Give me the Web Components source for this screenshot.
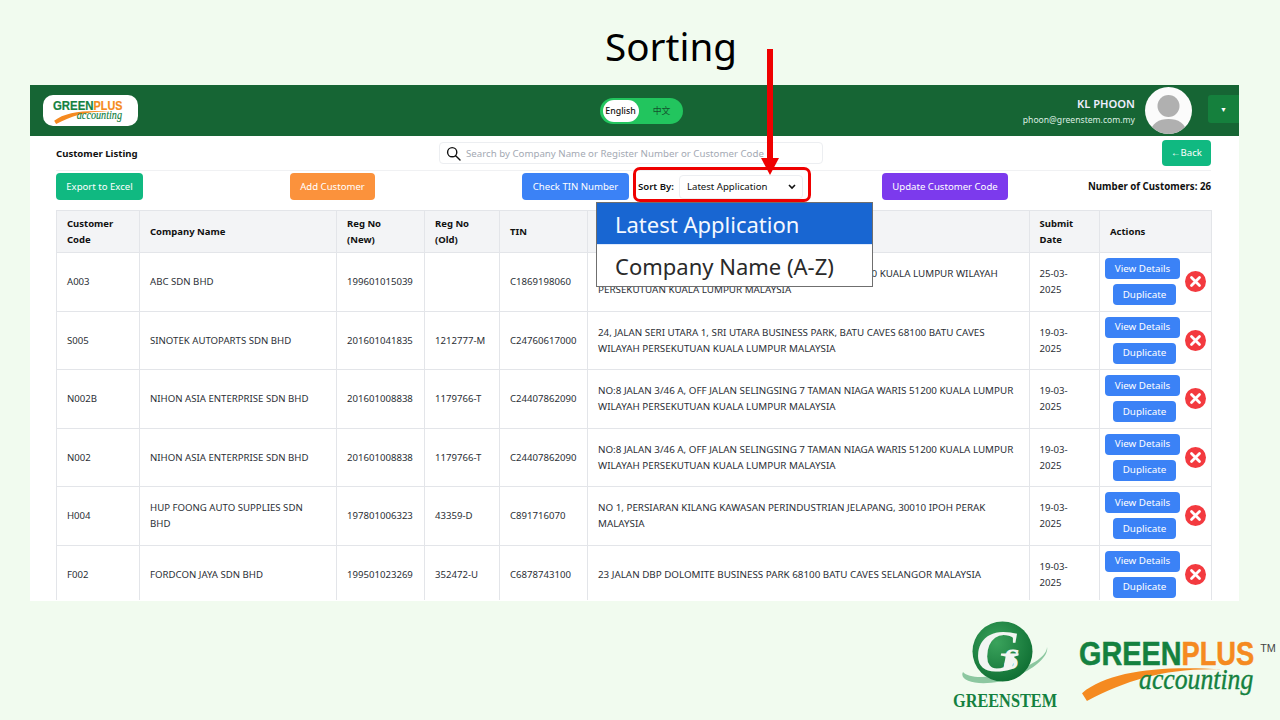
<!DOCTYPE html>
<html lang="en"><head><meta charset="utf-8"><title>Sorting</title>
<style>
html,body{margin:0;padding:0;background:#f1fbef;font-family:"Noto Sans","Open Sans",sans-serif;}
</style></head><body>
<gs-slide></gs-slide>
<script>
function def(name,css,html){
  customElements.define(name,class extends HTMLElement{
    connectedCallback(){
      if(this.shadowRoot)return;
      const r=this.attachShadow({mode:'open'});
      r.innerHTML='<style>'+css+'</style>'+(typeof html==='function'?html(this):html);
    }
  });
}
const gpLogo=(w,h,tm)=>`<svg width="${w}" height="${h}" viewBox="0 0 200 64" style="display:block;overflow:visible">
<text x="0" y="27" font-family="Liberation Sans" font-weight="700" font-size="33" fill="#14813f" stroke="#14813f" stroke-width=".5" textLength="104" lengthAdjust="spacingAndGlyphs">GREEN</text>
<text x="104" y="27" font-family="Liberation Sans" font-weight="700" font-size="33" fill="#f58a20" stroke="#f58a20" stroke-width=".5" textLength="74" lengthAdjust="spacingAndGlyphs">PLUS</text>
<path d="M3 56C30 34 80 28 146 32C90 30 50 42 8 64Z" fill="#f58a20"/>
<text x="61" y="52" font-family="Liberation Serif" font-style="italic" font-size="30" fill="#14813f" stroke="#14813f" stroke-width=".4" textLength="116" lengthAdjust="spacingAndGlyphs">accounting</text>
${tm?'<text x="184" y="14" font-family="Liberation Sans" font-size="11" fill="#444">TM</text>':''}
</svg>`;

def('gs-btn',`:host{display:inline-flex;align-items:center;justify-content:center;height:var(--h,27px);padding:0 var(--p,10.5px);border-radius:4px;background:var(--c,#3b82f6);color:#fff;font-size:var(--f,9.6px);line-height:1;white-space:nowrap;box-sizing:border-box}`,`<slot></slot>`);

def('gs-lang',`:host{display:flex;align-items:center;width:83px;height:26px;border-radius:13px;background:#22c55e;box-sizing:border-box;padding:2px 3px;font-size:8.8px;font-family:"Noto Sans","Noto Sans CJK SC",sans-serif}
.on{width:36px;height:22px;background:#fff;border-radius:11px;display:flex;align-items:center;justify-content:center;color:#111;font-weight:500}
.off{flex:1;text-align:center;color:#14532d;font-family:"Noto Sans CJK SC",sans-serif;padding-left:5px}`,`<div class="on">English</div><div class="off">中文</div>`);

def('gs-header',`:host{display:grid;grid-template-columns:1fr auto 1fr;align-items:center;height:51px;background:#166534;padding:0 0 0 13px;box-sizing:border-box;color:#fff}
.logo{width:95px;height:31px;background:#fff;border-radius:10px;display:flex;align-items:center;box-sizing:border-box;padding:1px 0 0 10px}
.right{display:flex;justify-content:flex-end;align-items:center}
.who{text-align:right;margin-right:10px;padding-top:2px}
.n{font-size:11.2px;font-weight:600;line-height:14px;color:#eef}
.e{font-size:8.6px;line-height:14px;color:#dcefe2;margin-top:2px}
.av{width:47px;height:47px;border-radius:50%;background:#fbfbfb;overflow:hidden;margin-right:16px}
.dd{width:31px;height:28px;background:#15803d;border-radius:3px 0 0 3px;display:flex;align-items:center;justify-content:center;font-size:7px;color:#fff;margin-bottom:3px}`,
`<div><div class="logo">${gpLogo(78,25,false)}</div></div>
<gs-lang></gs-lang>
<div class="right"><div class="who"><div class="n">KL PHOON</div><div class="e">phoon@greenstem.com.my</div></div>
<div class="av"><svg width="47" height="47" viewBox="0 0 47 47" style="display:block"><circle cx="23.5" cy="19" r="11" fill="#b0b0b0"/><path d="M5 47C6 36 14 32 23.5 32S41 36 42 47Z" fill="#b0b0b0"/></svg></div>
<div class="dd">▼</div></div>`);

def('gs-top',`:host{display:grid;grid-template-columns:383px 384px 1fr;align-items:center;height:35px;border-bottom:1px solid #f0f1f3;box-sizing:border-box}
.t{font-size:9.6px;font-weight:700;color:#111}
.s{height:22px;border:1px solid #eceef1;border-radius:4px;box-sizing:border-box;display:flex;align-items:center;padding-left:6px;font-size:9.7px;color:#a3a9b3;white-space:nowrap;overflow:hidden;gap:5px}
.r{display:flex;justify-content:flex-end}`,
`<div class="t">Customer Listing</div>
<div class="s"><svg width="15" height="15" viewBox="0 0 15 15" fill="none" stroke="#111" stroke-width="1.4" style="flex:none"><circle cx="6.2" cy="6.2" r="4.6"/><path d="M9.7 9.7L14 14" stroke-linecap="round"/></svg><span>Search by Company Name or Register Number or Customer Code</span></div>
<div class="r"><gs-btn style="--c:#10b981;--p:0;--h:26px;width:49px">←Back</gs-btn></div>`);

def('gs-tools',`:host{display:flex;align-items:center;height:27px;margin-top:2px;position:relative;font-size:9.6px;color:#111}
.sort{display:flex;align-items:center;margin-left:9px;width:171px;font-weight:600;font-size:9.6px;white-space:nowrap}
.sel{margin-left:5px;width:124px;height:24px;border:1px solid #eceef1;border-radius:4px;box-sizing:border-box;font-weight:400;display:flex;align-items:center;justify-content:space-between;padding:0 6px 0 7px;background:#fff}
.cnt{margin-left:auto;font-weight:700;font-size:9.7px;white-space:nowrap}
.g1{margin-left:147px}.g2{margin-left:147px}.g3{margin-left:73px}
.hl{position:absolute;left:577px;top:-6px;width:178px;height:35px;border:3px solid #ef0000;border-radius:7px;box-sizing:border-box;pointer-events:none}
.menu{position:absolute;left:540px;top:29px;width:277px;height:85px;border:1px solid #6f6f6f;background:#fff;box-sizing:border-box;z-index:5;font-size:22px;line-height:1;color:#2a2a2a}
.a{height:42px;background:#1866d2;color:#f4f8ff;display:flex;align-items:center;padding-left:18px;border-bottom:1px solid #dfeafc;box-sizing:border-box}
.b{height:41px;display:flex;align-items:center;padding-left:18px;white-space:nowrap}`,
`<gs-btn style="--c:#10b981;--p:0;width:87px">Export to Excel</gs-btn>
<gs-btn class="g1" style="--c:#fb923c;--p:0;width:85px">Add Customer</gs-btn>
<gs-btn class="g2" style="--p:0;width:107px">Check TIN Number</gs-btn>
<div class="sort">Sort By:<div class="sel"><span>Latest Application</span><svg width="8" height="6" viewBox="0 0 8 6" fill="none" stroke="#111" stroke-width="1.6"><path d="M1 1l3 3 3-3"/></svg></div></div>
<gs-btn class="g3" style="--c:#7c3aed;--p:0;width:126px">Update Customer Code</gs-btn>
<div class="cnt">Number of Customers: 26</div>
<div class="hl"></div>
<div class="menu"><div class="a">Latest Application</div><div class="b">Company Name (A-Z)</div></div>`);

const rows=[
["A003","ABC SDN BHD","199601015039","","C1869198060","LOT 123, JALAN INDUSTRI, KAWASAN PERINDUSTRIAN 50200 KUALA LUMPUR WILAYAH PERSEKUTUAN KUALA LUMPUR MALAYSIA","25-03-2025"],
["S005","SINOTEK AUTOPARTS SDN BHD","201601041835","1212777-M","C24760617000","24, JALAN SERI UTARA 1, SRI UTARA BUSINESS PARK, BATU CAVES 68100 BATU CAVES WILAYAH PERSEKUTUAN KUALA LUMPUR MALAYSIA","19-03-2025"],
["N002B","NIHON ASIA ENTERPRISE SDN BHD","201601008838","1179766-T","C24407862090","NO:8 JALAN 3/46 A, OFF JALAN SELINGSING 7 TAMAN NIAGA WARIS 51200 KUALA LUMPUR WILAYAH PERSEKUTUAN KUALA LUMPUR MALAYSIA","19-03-2025"],
["N002","NIHON ASIA ENTERPRISE SDN BHD","201601008838","1179766-T","C24407862090","NO:8 JALAN 3/46 A, OFF JALAN SELINGSING 7 TAMAN NIAGA WARIS 51200 KUALA LUMPUR WILAYAH PERSEKUTUAN KUALA LUMPUR MALAYSIA","19-03-2025"],
["H004","HUP FOONG AUTO SUPPLIES SDN<br>BHD","197801006323","43359-D","C891716070","NO 1, PERSIARAN KILANG KAWASAN PERINDUSTRIAN JELAPANG, 30010 IPOH PERAK MALAYSIA","19-03-2025"],
["F002","FORDCON JAYA SDN BHD","199501023269","352472-U","C6878743100","23 JALAN DBP DOLOMITE BUSINESS PARK 68100 BATU CAVES SELANGOR MALAYSIA","19-03-2025"]];
const cols=[83,197,88,75,88,441.5,70.5,112];

def('gs-actions',`:host{display:grid;grid-template-columns:75px 21px;justify-content:start;align-items:center;column-gap:5px;padding-left:5px}
.b{display:flex;flex-direction:column;align-items:flex-start;gap:5px}
gs-btn{--h:21px;--f:9.8px;--p:0}
svg{display:block}`,
`<div class="b"><gs-btn style="width:75px">View Details</gs-btn><gs-btn style="width:63px;margin-left:8px">Duplicate</gs-btn></div>
<svg width="21" height="21" viewBox="0 0 21 21"><circle cx="10.5" cy="10.5" r="10.5" fill="#f33a3f"/><path d="M6.5 6.5l8 8M14.5 6.5l-8 8" stroke="#fff" stroke-width="2.8" stroke-linecap="round"/></svg>`);

def('gs-table',`:host{display:block;margin:10px -1px 0 0;padding-right:1px;overflow:hidden;height:390px}
table{border-collapse:collapse;table-layout:fixed;width:1155px;font-size:9.6px;color:#2b2f36;line-height:16px}
th,td{border:1px solid #e3e5e9;padding:0 10px;text-align:left;box-sizing:border-box}
th{background:#f3f4f6;font-weight:700;color:#111;height:42px;font-size:9.5px}
td{height:58.5px;padding-top:1px}
td.x{padding:0}
td.c2{font-size:9.65px}
td.c6{font-size:9.82px}`,
()=>`<table><colgroup>${cols.map(c=>`<col style="width:${c}px">`).join('')}</colgroup>
<thead><tr><th>Customer<br>Code</th><th>Company Name</th><th>Reg No<br>(New)</th><th>Reg No<br>(Old)</th><th>TIN</th><th>Address</th><th>Submit<br>Date</th><th>Actions</th></tr></thead>
<tbody>${rows.map(r=>`<tr>${r.map((c,i)=>`<td class="c${i+1}">${c}</td>`).join('')}<td class="x"><gs-actions></gs-actions></td></tr>`).join('')}</tbody></table>`);

def('gs-app',`:host{display:block;width:1209px;height:516px;background:#fff;overflow:hidden}
.body{padding:0 28px 0 26px}`,
`<gs-header></gs-header><div class="body"><gs-top></gs-top><gs-tools></gs-tools><gs-table></gs-table></div>`);

def('gs-slide',`:host{display:block;width:1280px;height:720px;position:relative;overflow:hidden;background:#f1fbef}
h1{margin:0;height:85px;box-sizing:border-box;padding:21px 0 0 62px;text-align:center;font-weight:400;font-size:38.6px;line-height:50px;color:#000;font-family:"Noto Sans",sans-serif}
gs-app{margin-left:30px}
.foot{display:flex;justify-content:flex-end;align-items:flex-start;padding:22px 4px 0 0;gap:20px}
.arrow{position:absolute;left:761px;top:49px;pointer-events:none}`,
`<h1>Sorting</h1><gs-app></gs-app>
<div class="foot">
<svg width="110" height="90" viewBox="0 0 110 90" style="display:block;overflow:visible">
<defs><radialGradient id="g" cx=".4" cy=".35" r=".75"><stop offset="0" stop-color="#3aa35c"/><stop offset="1" stop-color="#0b6a2f"/></radialGradient></defs>
<path d="M14 49C8 60 40 66 70 52C88 44 100 32 98 24C98 34 80 44 60 50C40 55 20 56 14 49Z" fill="#8cc7a0"/>
<circle cx="53.5" cy="28.5" r="30" fill="url(#g)"/>
<text x="27" y="48" font-family="Liberation Serif" font-style="italic" font-weight="700" font-size="60" fill="#f2f5f2">G</text>
<text x="55" y="46" font-family="Liberation Serif" font-style="italic" font-weight="700" font-size="40" fill="#f2f5f2">s</text>
<text x="56" y="84" text-anchor="middle" font-family="Liberation Serif" font-weight="700" font-size="18.5" fill="#14813f" textLength="104" lengthAdjust="spacingAndGlyphs">GREENSTEM</text>
</svg>
<div style="margin-top:15px">${gpLogo(197,63,true)}</div>
</div>
<svg class="arrow" width="18" height="126" viewBox="0 0 18 126"><path d="M6 0h6v109h6l-9 17-9-17h6z" fill="#ef0000"/></svg>`);
</script>
</body></html>
